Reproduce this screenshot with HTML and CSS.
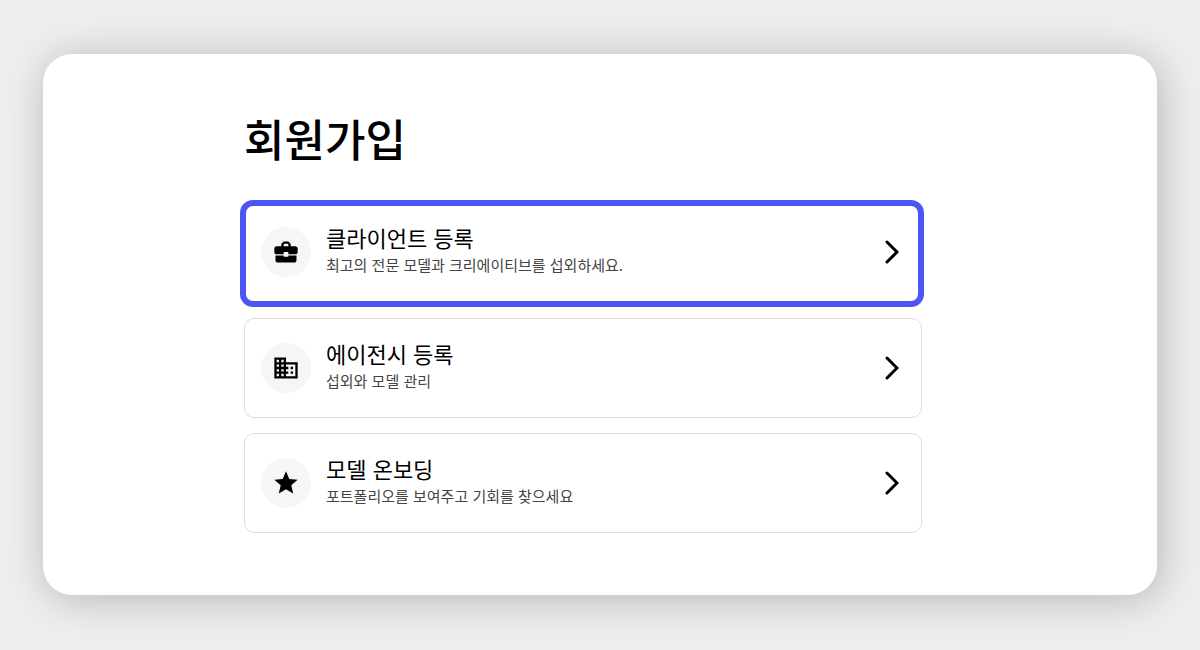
FILE: index.html
```
<!DOCTYPE html>
<html lang="ko">
<head>
    <meta charset="UTF-8">
    <meta name="viewport" content="width=device-width, initial-scale=1.0">
    <title>회원가입</title>
    <link rel="stylesheet" href="styles.css">
</head>
<body>
    <main class="panel">
        <h1 class="title">회원가입</h1>
        <div class="options">
            <button type="button" class="option selected">
                <span class="icon">
                    <svg viewBox="0 0 24 24" width="28" height="28">
                        <path d="M10 16v-1H3.010L3 19c0 1.110.89 2 2 2h14c1.110 0 2-.89 2-2v-4h-7v1h-4zm10-9h-4V5l-2-2h-4L8 5v2H4c-1.100 0-2 .9-2 2v3c0 1.110.89 2 2 2h6v-2h4v2h6c1.100 0 2-.9 2-2V9c0-1.100-.9-2-2-2zm-6 0h-4V5h4v2z"/>
                    </svg>
                </span>
                <span class="text">
                    <span class="name">클라이언트 등록</span>
                    <span class="desc">최고의 전문 모델과 크리에이티브를 섭외하세요.</span>
                </span>
                <svg class="arrow" viewBox="0 0 14 24" width="14" height="24">
                    <path d="M2 2L12 12L2 22"/>
                </svg>
            </button>
            <button type="button" class="option">
                <span class="icon">
                    <svg viewBox="0 0 24 24" width="28" height="28">
                        <path d="M12 7V3H2v18h20V7H12zM6 19H4v-2h2v2zm0-4H4v-2h2v2zm0-4H4V9h2v2zm0-4H4V5h2v2zm4 12H8v-2h2v2zm0-4H8v-2h2v2zm0-4H8V9h2v2zm0-4H8V5h2v2zm10 12h-8v-2h2v-2h-2v-2h2v-2h-2V9h8v10zm-2-8h-2v2h2v-2zm0 4h-2v2h2v-2z"/>
                    </svg>
                </span>
                <span class="text">
                    <span class="name">에이전시 등록</span>
                    <span class="desc">섭외와 모델 관리</span>
                </span>
                <svg class="arrow" viewBox="0 0 14 24" width="14" height="24">
                    <path d="M2 2L12 12L2 22"/>
                </svg>
            </button>
            <button type="button" class="option">
                <span class="icon">
                    <svg viewBox="0 0 24 24" width="28" height="28">
                        <path d="M12 17.270L18.180 21l-1.640-7.030L22 9.240l-7.190-.61L12 2 9.190 8.630 2 9.240l5.460 4.730L5.820 21z"/>
                    </svg>
                </span>
                <span class="text">
                    <span class="name">모델 온보딩</span>
                    <span class="desc">포트폴리오를 보여주고 기회를 찾으세요</span>
                </span>
                <svg class="arrow" viewBox="0 0 14 24" width="14" height="24">
                    <path d="M2 2L12 12L2 22"/>
                </svg>
            </button>
        </div>
    </main>
</body>
</html>
```
FILE: styles.css
```
* {
    box-sizing: border-box;
}
body {
    margin: 0;
    padding: 54px 43px 55px;
    background-color: #eeeeee;
    font-family: "Noto Sans CJK KR", sans-serif;
    color: #000;
}
.panel {
    padding: 52px 235px 62px 201px;
    background-color: #fff;
    border-radius: 29px;
    box-shadow: 3px 4px 40px rgba(0, 0, 0, 0.24);
}
.title {
    margin: 0 0 33px;
    font-size: 44px;
    font-weight: 500;
    line-height: 64px;
}
.options {
    display: flex;
    flex-direction: column;
    gap: 15px;
}
.option {
    display: flex;
    align-items: center;
    min-height: 100px;
    padding: 0 22px 0 16px;
    border: 1px solid #dddddd;
    border-radius: 10px;
    background-color: #fff;
    color: inherit;
    font-family: inherit;
    text-align: left;
    cursor: pointer;
}
/* thick frame grows outside the normal card edge */
.option.selected {
    min-height: 107px;
    margin: -3px -2px -4px -4px;
    padding: 0 19px 3px 15px;
    border: 6px solid #4d55f5;
    border-radius: 13px;
}
.icon {
    display: flex;
    align-items: center;
    justify-content: center;
    width: 50px;
    height: 50px;
    border-radius: 50%;
    background-color: #f6f6f6;
}
.text {
    flex: 1;
    display: flex;
    flex-direction: column;
    margin-left: 15px;
    padding-bottom: 5px;
}
.name {
    font-size: 22px;
    line-height: 30px;
}
.desc {
    font-size: 15px;
    line-height: 26px;
    color: #444;
}
.arrow {
    fill: none;
    stroke: #000;
    stroke-width: 3;
    stroke-linecap: round;
}
```
